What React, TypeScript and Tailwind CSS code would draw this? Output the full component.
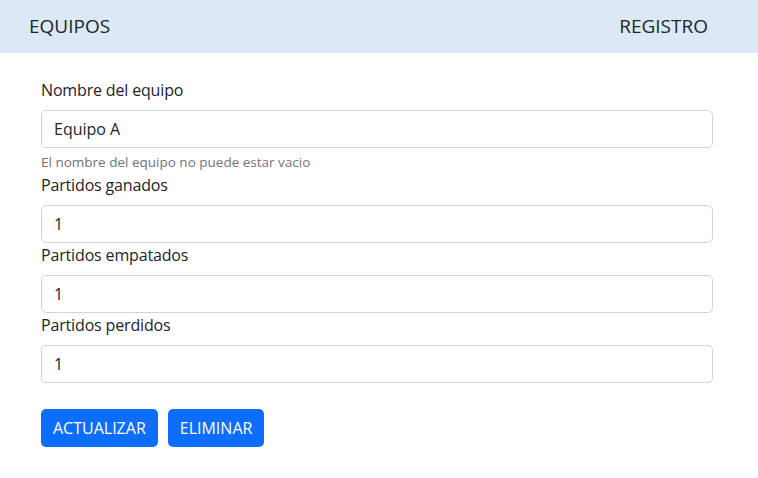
export default function App() {
  const fields = [
    { label: 'Partidos ganados', value: '1' },
    { label: 'Partidos empatados', value: '1' },
    { label: 'Partidos perdidos', value: '1' },
  ]

  return (
    <div className="min-h-screen bg-white text-[#212529]" style={{ fontFamily: '"Open Sans", "Noto Sans", sans-serif' }}>
      <nav className="flex h-[53px] items-center justify-between bg-[#dbe9f6] pl-[29px] pr-[50px] text-[19px]">
        <span>EQUIPOS</span>
        <span>REGISTRO</span>
      </nav>

      <form className="pl-[41px] pr-[45px] pt-[25px]">
        <div>
          <label className="mb-2 block text-base leading-6 tracking-[-0.01em]">Nombre del equipo</label>
          <input
            className="block h-[38px] w-full rounded-[5px] border border-[#ced4da] px-3 text-base outline-none"
            defaultValue="Equipo A"
          />
          <div className="mt-1 text-[13.5px] leading-[21px] text-[#6c757d]">El nombre del equipo no puede estar vacio</div>
        </div>

        {fields.map((f) => (
          <div key={f.label}>
            <label className="mb-2 block text-base leading-6 tracking-[-0.01em]">{f.label}</label>
            <input
              className="block h-[38px] w-full rounded-[5px] border border-[#ced4da] px-3 text-base outline-none"
              defaultValue={f.value}
            />
          </div>
        ))}

        <div className="mt-[26px] flex gap-[10px]">
          <button type="button" className="h-[38px] rounded-[5px] bg-[#0d6efd] px-3 text-base text-white">ACTUALIZAR</button>
          <button type="button" className="h-[38px] rounded-[5px] bg-[#0d6efd] px-3 text-base text-white">ELIMINAR</button>
        </div>
      </form>
    </div>
  )
}
